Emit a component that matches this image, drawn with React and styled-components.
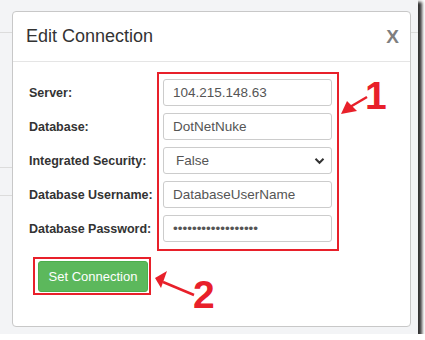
import React from "react";
import styled, { createGlobalStyle } from "styled-components";

const Global = createGlobalStyle`
  html, body { margin: 0; padding: 0; background: #fff; }
  body { font-family: "Liberation Sans", Arial, sans-serif; }
`;

const Frame = styled.div`
  position: relative;
  width: 418px;
  height: 334px;
  box-sizing: border-box;
  padding: 11px 0 0 12px;
  background-color: #f3f4f6;
  background-image:
    linear-gradient(#dcdcdc, #dcdcdc),
    linear-gradient(#dcdcdc, #dcdcdc),
    linear-gradient(#dcdcdc, #dcdcdc);
  background-size: 100% 1px, 12px 1px, 12px 1px;
  background-position: 0 32px, 0 167px, 0 195px;
  background-repeat: no-repeat;
  box-shadow: 3px 3px 3px 1px rgba(30, 30, 30, 0.9);
`;

const Modal = styled.div`
  width: 399px;
  height: 316px;
  box-sizing: border-box;
  background: #fff;
  border: 1px solid #c8c8c8;
  border-radius: 4px;
`;

const Header = styled.div`
  display: flex;
  align-items: center;
  justify-content: space-between;
  height: 49px;
  padding: 0 11px 0 13px;
  border-bottom: 1px solid #e5e5e5;
`;

const Title = styled.h4`
  margin: 0;
  font-size: 18px;
  font-weight: normal;
  color: #333;
`;

const Close = styled.span`
  font-size: 19px;
  font-weight: bold;
  color: #7f7f7f;
`;

const Body = styled.div`
  padding: 10px 0 0 16px;
`;

const FormRow = styled.div`
  display: flex;
  align-items: flex-start;
`;

const Labels = styled.div`
  display: flex;
  flex-direction: column;
  gap: 7px;
  width: 128px;
  padding-top: 7px;
`;

const Label = styled.label`
  height: 27px;
  display: flex;
  align-items: center;
  font-size: 12.5px;
  font-weight: bold;
  color: #333;
  white-space: nowrap;
`;

const Highlight = styled.div`
  border: 2px solid #e8202a;
  display: flex;
  flex-direction: column;
  gap: ${(p) => p.$gap || 0}px;
  padding: ${(p) => p.$pad};
  width: fit-content;
`;

const Field = styled.input`
  width: 169px;
  height: 27px;
  box-sizing: border-box;
  padding: 0 9px;
  border: 1px solid #ccc;
  border-radius: 3px;
  font-family: "Liberation Sans", Arial, sans-serif;
  font-size: 13.5px;
  color: #555;
  background: #fff;
  outline: none;
`;

const SelectBox = styled.div`
  width: 169px;
  height: 27px;
  box-sizing: border-box;
  border: 1px solid #ccc;
  border-radius: 3px;
  display: flex;
  align-items: center;
  justify-content: space-between;
  padding: 0 6px 0 12px;
  font-size: 13.5px;
  color: #555;
`;

const ButtonArea = styled.div`
  margin: 6px 0 0 4px;
`;

const Button = styled.button`
  width: 110px;
  height: 31px;
  background: #5cb85c;
  border: 1px solid #4cae4c;
  border-radius: 3px;
  color: #fff;
  font-family: "Liberation Sans", Arial, sans-serif;
  font-size: 13px;
  padding: 0;
`;

const Overlay = styled.svg`
  position: absolute;
  left: 0;
  top: 0;
  width: 418px;
  height: 334px;
  pointer-events: none;
`;

const Numeral = styled.span`
  position: absolute;
  left: ${(p) => p.$x}px;
  top: ${(p) => p.$y}px;
  font-size: 39px;
  font-weight: bold;
  color: #e8202a;
  line-height: 1;
`;

const labels = [
  "Server:",
  "Database:",
  "Integrated Security:",
  "Database Username:",
  "Database Password:",
];

export default function App() {
  return (
    <>
      <Global />
      <Frame>
        <Modal>
          <Header>
            <Title>Edit Connection</Title>
            <Close>X</Close>
          </Header>
          <Body>
            <FormRow>
              <Labels>
                {labels.map((l) => (
                  <Label key={l}>{l}</Label>
                ))}
              </Labels>
              <Highlight $gap={7} $pad="5px 5px 7px 4px">
                <Field readOnly value="104.215.148.63" />
                <Field readOnly value="DotNetNuke" />
                <SelectBox>
                  <span>False</span>
                  <svg width="11" height="8" viewBox="0 0 11 8">
                    <path d="M1.5 1.8 L5.5 5.8 L9.5 1.8" fill="none" stroke="#333" strokeWidth="2" />
                  </svg>
                </SelectBox>
                <Field readOnly value="DatabaseUserName" />
                <Field readOnly type="password" value="passwordpassword12" />
              </Highlight>
            </FormRow>
            <ButtonArea>
              <Highlight $pad="2px 1px 1px 3px">
                <Button>Set Connection</Button>
              </Highlight>
            </ButtonArea>
          </Body>
        </Modal>
        <Overlay viewBox="0 0 418 334">
          <line x1="367" y1="97" x2="350" y2="107" stroke="#e8202a" strokeWidth="2.5" />
          <polygon points="341,114 347,101 357,111" fill="#e8202a" />
          <line x1="194" y1="295" x2="163" y2="282" stroke="#e8202a" strokeWidth="2.5" />
          <polygon points="155,278 167,271 161,288" fill="#e8202a" />
        </Overlay>
        <Numeral $x={365} $y={76}>1</Numeral>
        <Numeral $x={193} $y={275}>2</Numeral>
      </Frame>
    </>
  );
}
